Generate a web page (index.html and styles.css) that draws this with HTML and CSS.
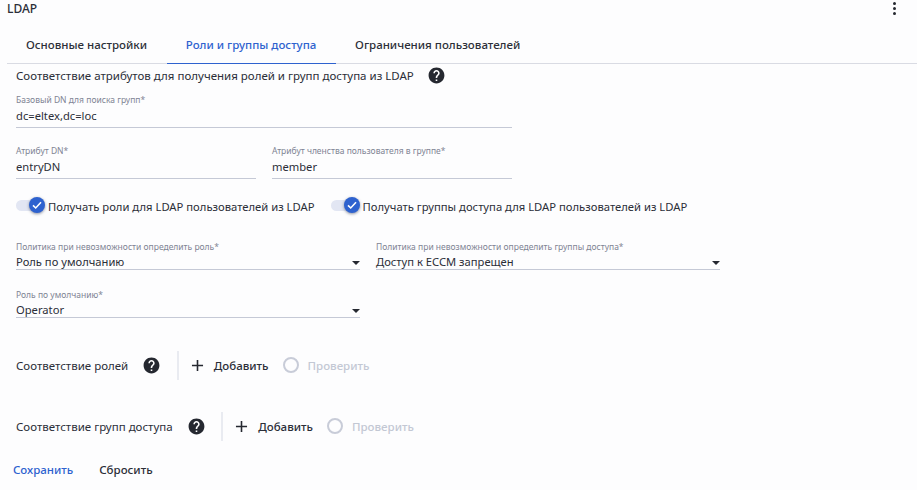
FILE: index.html
```html
<!DOCTYPE html>
<html lang="en">
<head>
  <meta charset="UTF-8" />
  <title>LDAP</title>
  <link rel="stylesheet" href="styles.css">
</head>
<body>
  <header class="top">
    <h1 class="top-title">LDAP</h1>
    <button class="more" aria-label="menu"><i></i><i></i><i></i></button>
  </header>

  <nav class="tabs">
    <a class="tab">Основные настройки</a>
    <a class="tab active">Роли и группы доступа</a>
    <a class="tab">Ограничения пользователей</a>
  </nav>

  <main class="form">
    <div class="section-head">
      <span>Соответствие атрибутов для получения ролей и групп доступа из LDAP</span>
      <svg class="help" viewBox="0 0 24 24"><use href="#q"/></svg>
    </div>

    <div class="row row-base">
      <label class="field w-wide">
        <span class="lbl">Базовый DN для поиска групп*</span>
        <span class="val">dc=eltex,dc=loc</span>
      </label>
    </div>

    <div class="row row-attrs">
      <label class="field w-half">
        <span class="lbl">Атрибут DN*</span>
        <span class="val">entryDN</span>
      </label>
      <label class="field w-half">
        <span class="lbl">Атрибут членства пользователя в группе*</span>
        <span class="val">member</span>
      </label>
    </div>

    <div class="row row-toggles">
      <div class="toggle">
        <span class="track"></span>
        <span class="knob"><svg viewBox="0 0 20 20"><path d="M5 10.4l3.4 3.3L15 6.6"/></svg></span>
        <span class="toggle-text">Получать роли для LDAP пользователей из LDAP</span>
      </div>
      <div class="toggle">
        <span class="track"></span>
        <span class="knob"><svg viewBox="0 0 20 20"><path d="M5 10.4l3.4 3.3L15 6.6"/></svg></span>
        <span class="toggle-text">Получать группы доступа для LDAP пользователей из LDAP</span>
      </div>
    </div>

    <div class="row row-policy">
      <label class="field w-select">
        <span class="lbl">Политика при невозможности определить роль*</span>
        <span class="val select">Роль по умолчанию</span>
      </label>
      <label class="field w-select">
        <span class="lbl">Политика при невозможности определить группы доступа*</span>
        <span class="val select">Доступ к ЕССМ запрещен</span>
      </label>
    </div>

    <div class="row row-role">
      <label class="field w-select">
        <span class="lbl">Роль по умолчанию*</span>
        <span class="val select">Operator</span>
      </label>
    </div>

    <div class="mapping mapping-roles">
      <span>Соответствие ролей</span>
      <svg class="help" viewBox="0 0 24 24"><use href="#q"/></svg>
      <span class="divider"></span>
      <button class="add"><svg viewBox="0 0 24 24"><path d="M19 13h-6v6h-2v-6H5v-2h6V5h2v6h6z"/></svg>Добавить</button>
      <button class="check"><span class="ring"></span>Проверить</button>
    </div>

    <div class="mapping mapping-groups">
      <span>Соответствие групп доступа</span>
      <svg class="help" viewBox="0 0 24 24"><use href="#q"/></svg>
      <span class="divider"></span>
      <button class="add"><svg viewBox="0 0 24 24"><path d="M19 13h-6v6h-2v-6H5v-2h6V5h2v6h6z"/></svg>Добавить</button>
      <button class="check"><span class="ring"></span>Проверить</button>
    </div>
  </main>

  <footer class="actions">
    <button class="save">Сохранить</button>
    <button class="reset">Сбросить</button>
  </footer>

  <svg class="defs" width="0" height="0">
    <symbol id="q" viewBox="0 0 24 24">
      <path d="M12 2C6.48 2 2 6.48 2 12s4.48 10 10 10 10-4.48 10-10S17.52 2 12 2zm1 17h-2v-2h2v2zm2.07-7.75l-.9.92C13.45 12.9 13 13.5 13 15h-2v-.5c0-1.1.45-2.1 1.17-2.83l1.24-1.26c.37-.36.59-.86.59-1.41 0-1.1-.9-2-2-2s-2 .9-2 2H8c0-2.21 1.79-4 4-4s4 1.79 4 4c0 .88-.36 1.68-.93 2.25z"/>
    </symbol>
  </svg>
</body>
</html>
```

FILE: styles.css
```css
* {
  margin: 0;
  padding: 0;
  box-sizing: border-box;
}

body {
  background: #fdfdfe;
  color: #2b2e38;
  font-family: "Noto Sans", sans-serif;
  font-size: 12px;
  height: 490px;
  overflow: hidden;
}

button {
  background: none;
  border: 0;
  font: inherit;
  color: inherit;
}

.defs {
  display: block;
}

.top {
  height: 27px;
  padding: 0 16px 0 7px;
  display: flex;
  align-items: center;
  justify-content: space-between;
}

.top-title {
  font-size: 12px;
  font-weight: 500;
  margin-top: -11px;
}

.more {
  width: 3px;
  display: flex;
  flex-direction: column;
  gap: 2px;
  margin: -11px 5px 0 0;
}

.more i {
  width: 3px;
  height: 3px;
  background: #252830;
  border-radius: 50%;
}

.tabs {
  margin-left: 7px;
  height: 37px;
  display: flex;
  border-bottom: 1px solid #d9dbe3;
}

.tab {
  height: 37px;
  padding: 10px 19.75px 0 19px;
  font-size: 11.5px;
  font-weight: 500;
  white-space: nowrap;
  color: #2c2f38;
}

.tab.active {
  color: #2e62cf;
  border-bottom: 1px solid #2e62cf;
}

.form {
  padding: 0 0 0 16px;
}

.section-head {
  height: 22px;
  display: flex;
  align-items: center;
  font-size: 11.5px;
}

.section-head .help {
  margin-left: 13px;
}

.help {
  width: 19px;
  height: 19px;
  fill: #252830;
  flex: none;
}

.row {
  display: flex;
}

.field {
  display: block;
  border-bottom: 1px solid #c5c9d6;
}

.w-wide { width: 496px; }
.w-half { width: 240px; }
.w-select { width: 344px; }

.row-base { margin-top: 7px; }
.row-attrs { margin-top: 16px; gap: 16px; }
.row-toggles { margin-top: 17px; gap: 16px; height: 20px; }
.row-policy { margin-top: 24px; gap: 16px; }
.row-role { margin-top: 18px; }

.lbl {
  display: block;
  height: 14px;
  line-height: 14px;
  font-size: 8.5px;
  color: #7f8494;
  white-space: nowrap;
}

.val {
  display: block;
  height: 20px;
  line-height: 18px;
  font-size: 11.2px;
  position: relative;
}

.val.select {
  height: 15px;
  line-height: 16px;
}

.select::after {
  content: "";
  position: absolute;
  right: 0;
  top: 7px;
  border: 4px solid transparent;
  border-top: 4px solid #252830;
  border-bottom: 0;
}

.toggle {
  position: relative;
  display: flex;
  align-items: center;
  height: 20px;
  padding-left: 32px;
  font-size: 11.25px;
  white-space: nowrap;
}

.track {
  position: absolute;
  left: 0;
  top: 4px;
  width: 28px;
  height: 11px;
  border-radius: 6px;
  background: #e2e6f3;
}

.knob {
  position: absolute;
  left: 13px;
  top: 1px;
  width: 16px;
  height: 16px;
  border-radius: 50%;
  background: #2e62cf;
  box-shadow: 0 1px 3px rgba(30, 40, 70, 0.5);
}

.knob svg {
  display: block;
  width: 16px;
  height: 16px;
  fill: none;
  stroke: #fff;
  stroke-width: 2;
}

.mapping {
  display: flex;
  align-items: center;
  height: 30px;
  font-size: 11.5px;
  white-space: nowrap;
}

.mapping-roles { margin-top: 32px; }
.mapping-groups { margin-top: 31px; }

.mapping .help {
  margin-left: 14px;
}

.divider {
  width: 2px;
  height: 29px;
  background: #e9ebf1;
  margin: 0 9px 0 15.5px;
}

.add {
  display: flex;
  align-items: center;
  font-weight: 500;
}

.add svg {
  width: 19px;
  height: 19px;
  fill: #252830;
  margin-right: 7px;
}

.check {
  display: flex;
  align-items: center;
  font-weight: 500;
  color: #c3c8d4;
  margin-left: 14px;
}

.ring {
  width: 16px;
  height: 16px;
  border: 2px solid #c8ccd8;
  border-radius: 50%;
  margin-right: 9px;
}

.actions {
  margin-top: 21px;
  padding-left: 13px;
  display: flex;
  gap: 26px;
  font-weight: 500;
}

.save {
  color: #2e62cf;
  font-size: 11.5px;
  font-weight: 500;
}

.reset {
  font-size: 11.5px;
  font-weight: 500;
}
```
